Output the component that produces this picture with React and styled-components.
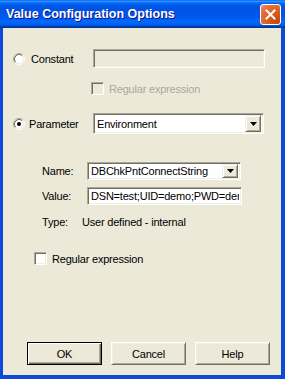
import React from "react";
import styled, { createGlobalStyle } from "styled-components";

const GlobalStyle = createGlobalStyle`
  html, body {
    margin: 0;
    padding: 0;
    background: #ece9d8;
  }
  body {
    font-family: "Liberation Sans", Arial, sans-serif;
    font-size: 11px;
    letter-spacing: -0.2px;
    color: #000;
  }
`;

const Window = styled.div`
  width: 285px;
  height: 379px;
  box-sizing: border-box;
  display: flex;
  flex-direction: column;
`;

const TitleBar = styled.div`
  height: 28px;
  flex: none;
  display: flex;
  align-items: center;
  justify-content: space-between;
  padding: 0 4px 0 6px;
  background: linear-gradient(
    to bottom,
    #0058ee 0%,
    #3593ff 4%,
    #288eff 6%,
    #127dff 8%,
    #036ffc 10%,
    #0262ee 14%,
    #0057e5 20%,
    #0054e3 24%,
    #0055eb 56%,
    #005bf5 66%,
    #026afe 76%,
    #0062ef 86%,
    #0052d6 92%,
    #0040ab 94%,
    #003092 100%
  );
`;

const Title = styled.span`
  color: #fff;
  font-weight: bold;
  font-size: 12.5px;
  letter-spacing: 0;
  text-shadow: 1px 1px #0f1089;
`;

const CloseButton = styled.div`
  width: 19px;
  height: 19px;
  border: 1px solid #fff;
  border-radius: 3px;
  display: flex;
  align-items: center;
  justify-content: center;
  background: radial-gradient(
    circle at 85% 85%,
    #cc4600 0%,
    #dc6527 55%,
    #e8734a 80%,
    #f39b80 100%
  );
`;

const Frame = styled.div`
  flex: 1;
  display: flex;
  flex-direction: column;
  border-style: solid;
  border-color: #0b4ad6;
  border-width: 0 4px 4px 3px;
  background: #ece9d8;
  padding: 21px 11px 10px 10px;
  min-height: 0;
`;

const Row = styled.div`
  display: flex;
  align-items: center;
  margin-top: ${({ $top }) => $top || 0}px;
  margin-left: ${({ $indent }) => $indent || 0}px;
`;

const ChoiceCell = styled.div`
  width: 80px;
  flex: none;
  display: flex;
  align-items: center;
  gap: ${({ $gap }) => $gap}px;
`;

const FieldLabel = styled.div`
  width: ${({ $w }) => $w || 45}px;
  flex: none;
`;

const Field = styled.div`
  box-sizing: border-box;
  width: ${({ $w }) => $w}px;
  height: ${({ $h }) => $h}px;
  background: ${({ $disabled }) => ($disabled ? "#ece9d8" : "#fff")};
  border: 1px solid;
  border-color: #aca899 #fff #fff #aca899;
  box-shadow: inset 1px 1px #716f64, inset -1px -1px #f1efe2;
  display: flex;
  align-items: center;
  padding: 0 2px 0 3px;
  overflow: hidden;
  white-space: nowrap;
`;

const FieldText = styled.span`
  flex: 1;
  overflow: hidden;
  white-space: nowrap;
`;

const ArrowButton = styled.div`
  box-sizing: border-box;
  width: 16px;
  height: ${({ $h }) => $h}px;
  flex: none;
  background: #ece9d8;
  border: 1px solid;
  border-color: #f1efe2 #716f64 #716f64 #f1efe2;
  box-shadow: inset 1px 1px #fff, inset -1px -1px #aca899;
  display: flex;
  align-items: center;
  justify-content: center;
`;

const Box = styled.span`
  box-sizing: border-box;
  width: 13px;
  height: 13px;
  flex: none;
  background: ${({ $disabled }) => ($disabled ? "#ece9d8" : "#fff")};
  border: 1px solid;
  border-color: #aca899 #fff #fff #aca899;
  box-shadow: inset 1px 1px #716f64, inset -1px -1px #f1efe2;
`;

const CheckLabel = styled.span`
  color: ${({ $disabled }) => ($disabled ? "#aca899" : "#000")};
  margin-left: 5px;
`;

const ButtonRow = styled.div`
  margin-top: auto;
  display: flex;
  justify-content: flex-end;
  gap: 9px;
`;

const PushButton = styled.div`
  box-sizing: border-box;
  width: 75px;
  height: 23px;
  display: flex;
  align-items: center;
  justify-content: center;
  background: #ece9d8;
  border: 1px solid;
  border-color: ${({ $default }) =>
    $default ? "#000" : "#fff #716f64 #716f64 #fff"};
  box-shadow: ${({ $default }) =>
    $default
      ? "inset 1px 1px #fff, inset -1px -1px #716f64, inset -2px -2px #aca899"
      : "inset 1px 1px #f1efe2, inset -1px -1px #aca899"};
`;

const Radio = ({ checked }) => (
  <svg width="12" height="12" viewBox="0 0 12 12" style={{ flex: "none" }}>
    <circle cx="6" cy="6" r="4.2" fill="#fff" />
    <path d="M9.89 2.11 A5.5 5.5 0 0 0 2.11 9.89" stroke="#aca899" fill="none" />
    <path d="M2.11 9.89 A5.5 5.5 0 0 0 9.89 2.11" stroke="#fff" fill="none" />
    <path d="M9.18 2.82 A4.5 4.5 0 0 0 2.82 9.18" stroke="#716f64" fill="none" />
    <path d="M2.82 9.18 A4.5 4.5 0 0 0 9.18 2.82" stroke="#f1efe2" fill="none" />
    {checked && <circle cx="6" cy="6" r="2" fill="#000" />}
  </svg>
);

const Arrow = () => (
  <svg width="7" height="4" viewBox="0 0 7 4">
    <path d="M0 0 H7 L3.5 4 Z" fill="#000" />
  </svg>
);

const CloseX = () => (
  <svg width="11" height="11" viewBox="0 0 11 11">
    <path d="M1.5 1.5 L9.5 9.5 M9.5 1.5 L1.5 9.5" stroke="#fff" strokeWidth="2" strokeLinecap="square" />
  </svg>
);

export default function App() {
  return (
    <>
      <GlobalStyle />
      <Window>
        <TitleBar>
          <Title>Value Configuration Options</Title>
          <CloseButton>
            <CloseX />
          </CloseButton>
        </TitleBar>
        <Frame>
          <Row>
            <ChoiceCell $gap={6}>
              <Radio />
              <span>Constant</span>
            </ChoiceCell>
            <Field $w={172} $h={19} $disabled />
          </Row>

          <Row $top={14} $indent={78}>
            <Box $disabled />
            <CheckLabel $disabled>Regular expression</CheckLabel>
          </Row>

          <Row $top={18}>
            <ChoiceCell $gap={4}>
              <Radio checked />
              <span>Parameter</span>
            </ChoiceCell>
            <Field $w={171} $h={21}>
              <FieldText>Environment</FieldText>
              <ArrowButton $h={17}>
                <Arrow />
              </ArrowButton>
            </Field>
          </Row>

          <Row $top={28} $indent={29}>
            <FieldLabel>Name:</FieldLabel>
            <Field $w={154} $h={18}>
              <FieldText>DBChkPntConnectString</FieldText>
              <ArrowButton $h={14}>
                <Arrow />
              </ArrowButton>
            </Field>
          </Row>

          <Row $top={7} $indent={29}>
            <FieldLabel>Value:</FieldLabel>
            <Field $w={155} $h={18}>
              <FieldText>DSN=test;UID=demo;PWD=der</FieldText>
            </Field>
          </Row>

          <Row $top={8} $indent={29} style={{ height: 18 }}>
            <FieldLabel $w={40}>Type:</FieldLabel>
            <span>User defined - internal</span>
          </Row>

          <Row $top={21} $indent={21}>
            <Box />
            <CheckLabel>Regular expression</CheckLabel>
          </Row>

          <ButtonRow>
            <PushButton $default>OK</PushButton>
            <PushButton>Cancel</PushButton>
            <PushButton>Help</PushButton>
          </ButtonRow>
        </Frame>
      </Window>
    </>
  );
}
